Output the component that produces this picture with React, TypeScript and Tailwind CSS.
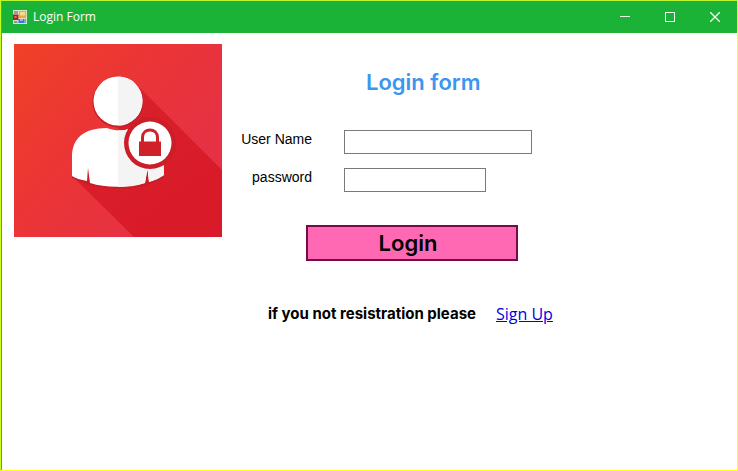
import React from "react";

function AppIcon() {
  return (
    <svg width="14" height="14" viewBox="0 0 14 14" aria-hidden="true">
      <rect width="14" height="14" fill="#d9e2d2" />
      <rect x="1" y="1" width="4" height="3" fill="#9aa08c" />
      <rect x="0" y="4.500" width="5.500" height="5.500" fill="#a3261c" />
      <rect x="1.500" y="6" width="2" height="2" fill="#e8705c" />
      <rect x="6" y="1" width="7" height="7" fill="#f0ab2c" />
      <rect x="7" y="2" width="5" height="3.500" fill="#fbdc7c" />
      <rect x="5.500" y="9" width="6" height="4" fill="#3f74dc" />
      <rect x="7" y="9" width="3" height="2" fill="#8fb4f5" />
      <rect x="1" y="11" width="3.500" height="2" fill="#8b9886" />
      <rect x="12" y="9" width="1" height="4" fill="#8b9886" />
    </svg>
  );
}

function UserLockPicture() {
  return (
    <svg className="block shrink-0" width="208" height="193" viewBox="0 0 208 193" role="img" aria-label="User login">
      <defs>
        <linearGradient id="backdrop" gradientUnits="userSpaceOnUse" x1="0" y1="0" x2="170" y2="130">
          <stop offset="0" stopColor="#f04127" />
          <stop offset="0.5" stopColor="#eb3535" />
          <stop offset="1" stopColor="#e63144" />
        </linearGradient>
        <linearGradient id="shade" gradientUnits="userSpaceOnUse" x1="110" y1="60" x2="190" y2="170">
          <stop offset="0" stopColor="#d9202b" />
          <stop offset="1" stopColor="#d91a29" />
        </linearGradient>
        <clipPath id="right-half">
          <rect x="104" y="0" width="104" height="193" />
        </clipPath>
      </defs>
      <rect width="208" height="193" fill="url(#backdrop)" />
      <path d="M121 39 L208 126 V193 H120 L62 136 L104 85 Z" fill="url(#shade)" />
      <g fill="#c91d26">
        <circle cx="104" cy="58" r="25.5" />
        <path d="M58 134 C72 141 88 145 105 145 C122 145 136 141 150 134 V120 H58 Z" />
      </g>
      <g fill="#fff">
        <circle cx="104" cy="57" r="24.5" />
        <path d="M58 132 V113 C58 95 69 84 93 84 C100 87 109 87 115 85 C120 85 128 87 133 90 L150 116 V131 C146 134 141 136 135 138 L133.500 125 L131 139 C112 144 92 144 76 139 L74 124 L73 137 C67 136 61 134 58 132 Z" />
      </g>
      <g fill="#f4f4f5" clipPath="url(#right-half)">
        <circle cx="104" cy="57" r="24.5" />
        <path d="M104 86 C108 87 112 86 115 85 C120 85 128 87 133 90 L150 116 V131 C146 134 141 136 135 138 L133.500 125 L131 139 C122 142 113 143 104 143 Z" />
      </g>
      <circle cx="136" cy="99" r="26" fill="#cb1e29" />
      <circle cx="136" cy="99" r="21.5" fill="#fff" />
      <path d="M128.500 98 V93.500 C128.500 83.500 143.500 83.500 143.500 93.500 V98" fill="none" stroke="#d02029" strokeWidth="3" />
      <rect x="125" y="97.500" width="22" height="14.500" fill="#d02029" />
    </svg>
  );
}

const captionButton = "flex h-8 w-[45px] items-center justify-center";

export default function App() {
  return (
    <div className="flex min-h-screen border border-x-[#ffff00] border-t-[#bdf52c] border-b-[#ffff00] border-l-[#c8ff20] bg-white font-['Liberation_Sans',Arial,sans-serif] text-black">
      <div className="flex flex-1 flex-col border-l border-[#5cab20]">
        <header className="flex h-8 items-center bg-[#1bb337] pl-[11px] text-white">
          <AppIcon />
          <span className="ml-[6px] flex-1 font-['Open_Sans','Noto_Sans',sans-serif] text-xs">Login Form</span>
          <button type="button" aria-label="Minimize" className={captionButton}>
            <svg width="10" height="10" viewBox="0 0 10 10"><path d="M0 4.500H10" stroke="#f0fff0" /></svg>
          </button>
          <button type="button" aria-label="Maximize" className={captionButton}>
            <svg width="10" height="10" viewBox="0 0 10 10"><rect x="0.500" y="0.500" width="9" height="9" fill="none" stroke="#f0fff0" /></svg>
          </button>
          <button type="button" aria-label="Close" className={captionButton}>
            <svg width="10" height="10" viewBox="0 0 10 10"><path d="M0 0L10 10M10 0L0 10" stroke="#f0fff0" strokeWidth="1.300" /></svg>
          </button>
        </header>
        <main className="flex flex-1 items-start px-3 pt-[11px]">
          <UserLockPicture />
          <form className="flex flex-col items-start pl-[19px] pt-6" onSubmit={(e) => e.preventDefault()}>
            <h1 className="ml-[125px] font-[Inter,sans-serif] text-[22px] leading-7 font-semibold text-[#3c96f0]">Login form</h1>
            <div className="mt-[34px] grid grid-cols-[71px_auto] items-start gap-x-8 gap-y-[14px]">
              <label htmlFor="user" className="text-right text-sm leading-[18px] whitespace-nowrap">User Name</label>
              <input id="user" type="text" className="h-6 w-[188px] border border-[#7a7a7a] px-1 text-sm outline-none" />
              <label htmlFor="password" className="text-right text-sm leading-[18px]">password</label>
              <input id="password" type="password" className="h-6 w-[142px] border border-[#7a7a7a] px-1 text-sm outline-none" />
            </div>
            <button type="submit" className="mt-[33px] ml-[65px] h-9 w-[212px] border-2 border-[#750c48] bg-[#ff69b4] pr-2 font-[Inter,sans-serif] text-[22px] leading-7 font-semibold">
              Login
            </button>
            <p className="mt-[41px] ml-[27px] flex items-center gap-5 font-[Inter,sans-serif] text-[15px] leading-6 font-bold whitespace-nowrap">
              if you not resistration please
              <a href="#signup" className="font-['Open_Sans','Noto_Sans',sans-serif] text-base font-normal text-[#0000e0] underline">Sign Up</a>
            </p>
          </form>
        </main>
      </div>
    </div>
  );
}
